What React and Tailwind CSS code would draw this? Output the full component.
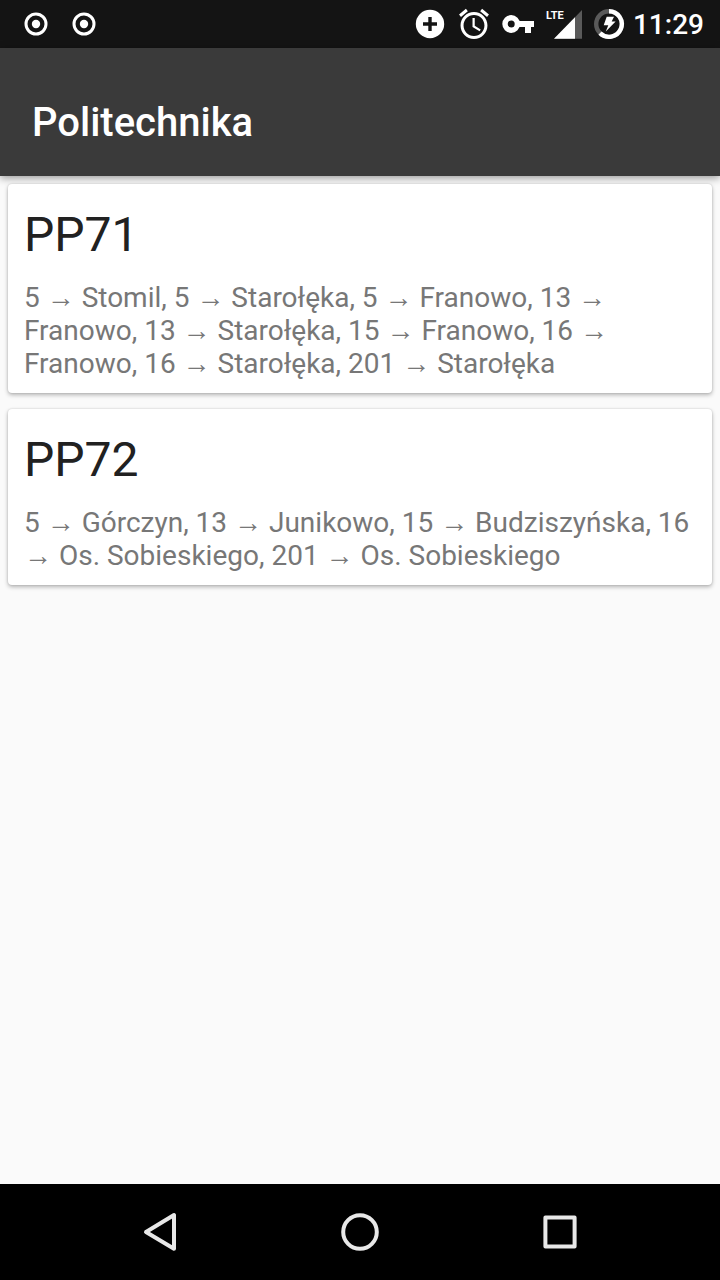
function TargetIcon() {
  return (
    <svg className="size-6 text-white" viewBox="0 0 24 24" fill="none" aria-hidden="true">
      <circle cx="12" cy="12" r="10" stroke="currentColor" strokeWidth="3" />
      <circle cx="12" cy="12" r="4.2" fill="currentColor" />
    </svg>
  );
}

function StatusBar() {
  return (
    <div className="flex h-12 shrink-0 items-center justify-between bg-[#141414] pr-4 pl-6">
      <div className="flex gap-6">
        <TargetIcon />
        <TargetIcon />
      </div>
      <div className="flex items-center gap-2 text-white">
        <div className="flex items-center gap-[11px]">
          <div className="flex items-center gap-3">
            <svg className="size-8 shrink-0" viewBox="0 0 32 32" aria-hidden="true">
              <circle cx="16" cy="16" r="14.2" fill="currentColor" />
              <path d="M16 9v14M9 16h14" stroke="#141414" strokeWidth="3.4" />
            </svg>
            <svg className="size-8 shrink-0" viewBox="1.3 1.3 21.4 21.4" fill="currentColor" aria-hidden="true">
              <path d="M22 5.72l-4.6-3.86-1.29 1.53 4.6 3.86L22 5.72zM7.88 3.39L6.6 1.86 2 5.71l1.29 1.53 4.59-3.85zM12.5 8H11v6l4.75 2.85.75-1.23-4-2.37V8zM12 4c-4.97 0-9 4.03-9 9s4.02 9 9 9c4.97 0 9-4.03 9-9s-4.03-9-9-9zm0 16c-3.87 0-7-3.13-7-7s3.13-7 7-7 7 3.13 7 7-3.13 7-7 7z" />
            </svg>
            <svg className="size-8 shrink-0" viewBox="0 0 32 32" aria-hidden="true">
              <circle cx="9.2" cy="16" r="6.2" fill="none" stroke="currentColor" strokeWidth="5.4" />
              <path d="M16 13h16v6h-3v6h-6v-6h-7z" fill="currentColor" />
            </svg>
            <div className="relative h-8 w-9 shrink-0">
              <svg className="size-full" viewBox="0 0 36 32" aria-hidden="true">
                <path d="M36 2v28.7H8z" fill="#5a5a5a" />
                <path d="M29 9.2v21.5H8z" fill="currentColor" />
              </svg>
              <span className="absolute top-0.5 left-0 text-[11px] leading-3 font-bold">LTE</span>
            </div>
          </div>
          <svg className="size-8 shrink-0" viewBox="0 0 32 32" aria-hidden="true">
            <circle cx="16" cy="16" r="12.8" fill="none" stroke="#5a5a5a" strokeWidth="4.4" />
            <path d="M16 3.2A12.8 12.8 0 1 1 7 25.1" fill="none" stroke="currentColor" strokeWidth="4.4" />
            <path d="M13.7 8.7H21L18.7 13.4H22.6L12.8 23.4L15.3 17.3H10.7z" fill="currentColor" />
          </svg>
        </div>
        <time className="pt-0.5 text-[28px] leading-8 font-medium">11:29</time>
      </div>
    </div>
  );
}

const stops = [
  {
    name: "PP71",
    lines:
      "5 → Stomil, 5 → Starołęka, 5 → Franowo, 13 → Franowo, 13 → Starołęka, 15 → Franowo, 16 → Franowo, 16 → Starołęka, 201 → Starołęka",
  },
  {
    name: "PP72",
    lines:
      "5 → Górczyn, 13 → Junikowo, 15 → Budziszyńska, 16 → Os. Sobieskiego, 201 → Os. Sobieskiego",
  },
];

function NavButton({ label, children }) {
  return (
    <button type="button" aria-label={label}>
      <svg
        className="size-12"
        viewBox="0 0 48 48"
        fill="none"
        stroke="#e8e8e8"
        strokeWidth="4"
        strokeLinejoin="round"
        aria-hidden="true"
      >
        {children}
      </svg>
    </button>
  );
}

export default function App() {
  return (
    <div className="flex min-h-screen flex-col bg-[#fafafa] font-['Roboto','Noto_Sans',sans-serif]">
      <StatusBar />
      <header className="flex h-32 shrink-0 items-center bg-[#3a3a3a] px-8 pt-[22px] shadow-[0_2px_8px_rgba(0,0,0,0.4)]">
        <h1 className="text-[40px] leading-12 font-medium text-white">Politechnika</h1>
      </header>
      <main className="flex grow flex-col gap-4 px-2 py-2">
        {stops.map((stop) => (
          <section
            key={stop.name}
            className="rounded-sm bg-white px-4 pt-[21px] pb-[13px] shadow-[0_2px_4px_rgba(0,0,0,0.28),0_0_2px_rgba(0,0,0,0.16)]"
          >
            <h2 className="text-[48px] leading-[60px] text-[#212121]">{stop.name}</h2>
            <p className="mt-4 text-[28px] leading-[33px] text-[#777777]">{stop.lines}</p>
          </section>
        ))}
      </main>
      <nav className="flex h-24 shrink-0 items-center justify-center gap-[152px] bg-black">
        <NavButton label="Back">
          <path d="M38 7v33.8L10 24z" />
        </NavButton>
        <NavButton label="Home">
          <circle cx="24" cy="24" r="16.8" />
        </NavButton>
        <NavButton label="Recent apps">
          <path d="M9.4 9.4h29.2v29.2H9.4z" />
        </NavButton>
      </nav>
    </div>
  );
}
